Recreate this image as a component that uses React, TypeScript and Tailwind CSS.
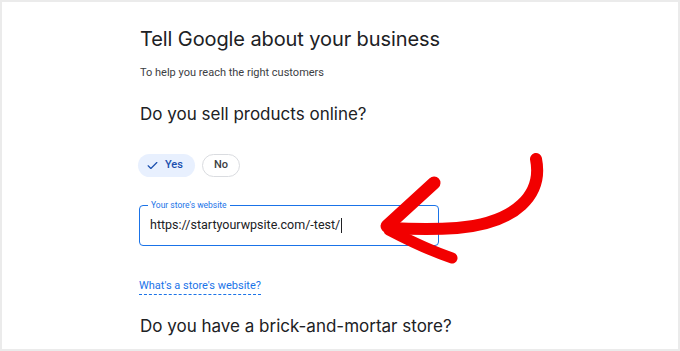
import React from "react";

export default function App() {
  return (
    <div className="relative w-[680px] h-[351px] overflow-hidden bg-white border-2 border-[#ebebeb] [font-family:Roboto,'Liberation_Sans',sans-serif]">
      <div className="flex flex-col items-start pl-[136px] pt-[23px]">
        <h1 className="ml-[2px] text-[20px] leading-[28px] text-[#202124] [font-family:Inter,Roboto,sans-serif] font-normal tracking-[-0.1px]">
          Tell Google about your business
        </h1>
        <p className="ml-[2px] mt-[13px] text-[11px] leading-[14px] text-[#3c4043]">
          To help you reach the right customers
        </p>
        <h2 className="ml-[2px] mt-[22px] text-[17px] leading-[24px] text-[#202124] [font-family:Inter,Roboto,sans-serif] font-normal">
          Do you sell products online?
        </h2>
        <div className="mt-[28px] flex gap-[7px]">
          <div className="flex h-[23px] items-center gap-[6px] rounded-full bg-[#e8f0fe] pl-[8px] pr-[12px] text-[11px] font-medium text-[#1a4fae]">
            <svg width="13" height="13" viewBox="0 0 24 24" fill="none" stroke="#1a4fae" strokeWidth="2.2" strokeLinecap="round" strokeLinejoin="round">
              <path d="M4 12.5l5 5L20 6.5" />
            </svg>
            <span>Yes</span>
          </div>
          <div className="flex h-[23px] items-center rounded-full border border-[#dadce0] px-[11px] text-[11px] font-medium text-[#3c4043]">
            No
          </div>
        </div>
        <div className="relative mt-[28px] ml-[1px] flex h-[41px] w-[300px] items-center rounded-[4px] border border-[#1a73e8] px-[10px]">
          <span className="absolute left-[8px] top-[-7px] bg-white px-[3px] text-[8.5px] leading-[12px] text-[#1a73e8]">
            Your store's website
          </span>
          <span className="text-[12.5px] text-[#202124]">https://startyourwpsite.com/-test/</span>
          <span className="ml-[1px] h-[15px] w-[1px] bg-[#202124]" />
        </div>
        <a className="mt-[33px] ml-[1px] text-[11px] leading-[14px] text-[#1a73e8] border-b border-dashed border-[#1a73e8] pb-[1px]">
          What's a store's website?
        </a>
        <h2 className="ml-[2px] mt-[19px] text-[17px] leading-[24px] text-[#202124] [font-family:Inter,Roboto,sans-serif] font-normal">
          Do you have a brick-and-mortar store?
        </h2>
      </div>
      <svg className="absolute left-0 top-0" width="680" height="351" viewBox="0 0 680 351" fill="none">
        <path d="M534 157 C 541 192, 515 221, 455 226 C 430 228, 405 227, 387 226" stroke="#f20000" strokeWidth="12" strokeLinecap="round" />
        <path d="M432 181 L 385 224" stroke="#f20000" strokeWidth="13" strokeLinecap="round" />
        <path d="M387 228 C 410 240, 432 250, 450 256" stroke="#f20000" strokeWidth="11" strokeLinecap="round" />
      </svg>
    </div>
  );
}
